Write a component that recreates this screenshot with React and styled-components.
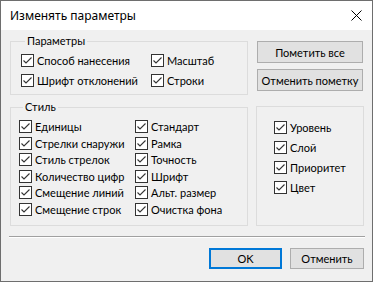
import React, { useState } from "react";
import styled, { createGlobalStyle } from "styled-components";

const GlobalStyle = createGlobalStyle`
  html, body {
    margin: 0;
    padding: 0;
    background: #ffffff;
  }
  * {
    box-sizing: border-box;
  }
`;

const Window = styled.div`
  width: 373px;
  height: 282px;
  border: 1px solid #6e6e6e;
  background: #f0f0f0;
  font-family: Lato, "Noto Sans", sans-serif;
  font-size: 11px;
  color: #000;
  display: flex;
  flex-direction: column;
`;

const TitleBar = styled.div`
  height: 29px;
  background: #ffffff;
  display: flex;
  align-items: center;
  justify-content: space-between;
  padding-left: 9px;
  padding-right: 10px;
  font-family: "Noto Sans", sans-serif;
  font-size: 12px;
`;

const CloseButton = styled.div`
  width: 12px;
  height: 12px;
  display: flex;
  align-items: center;
  justify-content: center;
`;

const Body = styled.div`
  flex: 1;
  padding: 4px 8px 0 9px;
  display: flex;
  flex-direction: column;
`;

const Row = styled.div`
  display: flex;
  align-items: flex-start;
  gap: ${(p) => p.gap}px;
  margin-top: ${(p) => p.top || 0}px;
`;

const Group = styled.fieldset`
  margin: ${(p) => p.mt || 0}px 0 0 0;
  width: ${(p) => p.w}px;
  height: ${(p) => p.h}px;
  border: 1px solid #dcdcdc;
  padding: ${(p) => p.pad};
  min-width: 0;
  display: grid;
  grid-template-columns: ${(p) => p.cols};
  grid-auto-rows: ${(p) => p.rowH}px;
  align-content: start;
`;

const Legend = styled.legend`
  padding: 0 2px;
  margin-left: 4px;
  line-height: 14px;
  font-size: 11px;
`;

const Item = styled.label`
  display: flex;
  align-items: center;
  gap: 3px;
  height: 13px;
  white-space: nowrap;
  line-height: 13px;
`;

const Box = styled.span`
  width: 13px;
  height: 13px;
  flex: none;
  border: 1px solid #333333;
  background: #ffffff;
  display: flex;
  align-items: center;
  justify-content: center;
`;

const SideButtons = styled.div`
  display: flex;
  flex-direction: column;
  gap: 6px;
  margin-top: 7px;
`;

const Button = styled.button`
  width: ${(p) => p.w}px;
  height: ${(p) => p.h}px;
  background: #e1e1e1;
  border: ${(p) => (p.primary ? "2px solid #0078d7" : "1px solid #adadad")};
  font-family: inherit;
  font-size: 11px;
  color: #000;
  padding: 0;
  line-height: 1;
`;

const Separator = styled.div`
  height: 1px;
  background: #a0a0a0;
  margin: 10px 0 0 -1px;
  width: 356px;
  border-bottom: 1px solid #ffffff;
  box-sizing: content-box;
`;

const Footer = styled.div`
  display: flex;
  justify-content: flex-end;
  gap: 8px;
  margin-top: 10px;
`;

function Check({ label }) {
  const [on, setOn] = useState(true);
  return (
    <Item onClick={() => setOn(!on)}>
      <Box>
        {on && (
          <svg width="11" height="11" viewBox="0 0 11 11">
            <polyline points="1.5,5.5 4,8 9.5,2.5" fill="none" stroke="#333" strokeWidth="1.1" />
          </svg>
        )}
      </Box>
      {label}
    </Item>
  );
}

export default function App() {
  return (
    <>
      <GlobalStyle />
      <Window>
        <TitleBar>
          <span>Изменять параметры</span>
          <CloseButton>
            <svg width="11" height="11" viewBox="0 0 11 11">
              <path d="M0.5 0.5 L10.5 10.5 M10.5 0.5 L0.5 10.5" stroke="#000" strokeWidth="1" />
            </svg>
          </CloseButton>
        </TitleBar>
        <Body>
          <Row gap={9}>
            <Group w={238} h={61} pad="6px 0 0 10px" cols="130px 90px" rowH={20}>
              <Legend>Параметры</Legend>
              <Check label="Способ нанесения" />
              <Check label="Масштаб" />
              <Check label="Шрифт отклонений" />
              <Check label="Строки" />
            </Group>
            <SideButtons>
              <Button w={106} h={22}>Пометить все</Button>
              <Button w={106} h={22}>Отменить пометку</Button>
            </SideButtons>
          </Row>
          <Row gap={8} top={5}>
            <Group w={238} h={126} pad="6px 0 0 8px" cols="116px 110px" rowH={16.6}>
              <Legend>Стиль</Legend>
              <Check label="Единицы" />
              <Check label="Стандарт" />
              <Check label="Стрелки снаружи" />
              <Check label="Рамка" />
              <Check label="Стиль стрелок" />
              <Check label="Точность" />
              <Check label="Количество цифр" />
              <Check label="Шрифт" />
              <Check label="Смещение линий" />
              <Check label="Альт. размер" />
              <Check label="Смещение строк" />
              <Check label="Очистка фона" />
            </Group>
            <Group w={108} h={120} mt={6} pad="14px 0 0 17px" cols="1fr" rowH={20}>
              <Check label="Уровень" />
              <Check label="Слой" />
              <Check label="Приоритет" />
              <Check label="Цвет" />
            </Group>
          </Row>
          <Separator />
          <Footer>
            <Button w={73} h={21} primary>OK</Button>
            <Button w={74} h={21}>Отменить</Button>
          </Footer>
        </Body>
      </Window>
    </>
  );
}
